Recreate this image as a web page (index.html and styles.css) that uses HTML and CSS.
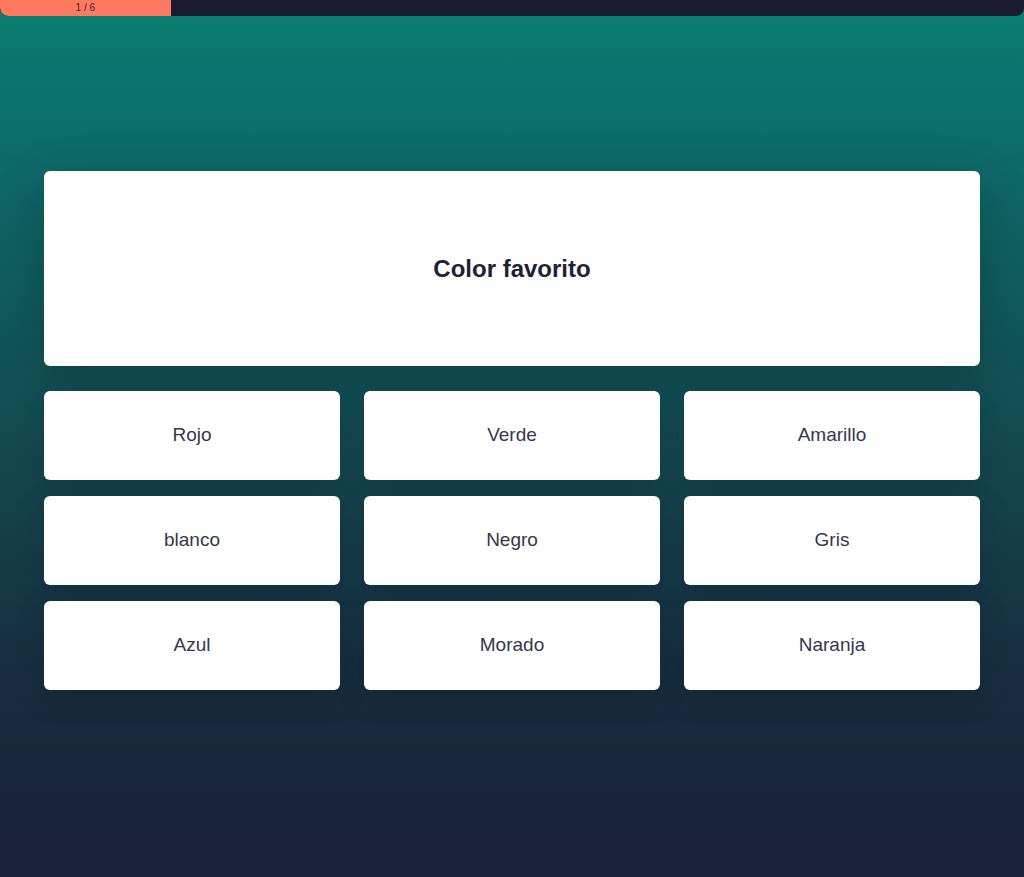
FILE: index.html
```html
<!DOCTYPE html>
<html lang="es">
<head>
<meta charset="utf-8">
<title>Color favorito</title>
<link rel="stylesheet" href="styles.css">
</head>
<body>
<div class="progress">
  <div class="progress-fill" style="width: 16.6667%"><span class="progress-label">1 / 6</span></div>
</div>
<main class="stage">
  <section class="question">
    <h1 class="question-title">Color favorito</h1>
  </section>
  <div class="options">
    <button class="option">Rojo</button>
    <button class="option">Verde</button>
    <button class="option">Amarillo</button>
    <button class="option">blanco</button>
    <button class="option">Negro</button>
    <button class="option">Gris</button>
    <button class="option">Azul</button>
    <button class="option">Morado</button>
    <button class="option">Naranja</button>
  </div>
</main>
</body>
</html>
```

FILE: styles.css
```css
* { box-sizing: border-box; }
html, body { height: 100%; }
body {
  margin: 0;
  font-family: "Liberation Sans", Arial, sans-serif;
  background: linear-gradient(180deg, #0a7e73 0%, #0e6868 20%, #134a50 50%, #172f40 75%, #1a2037 100%);
  min-height: 877px;
  overflow: hidden;
}
.progress {
  height: 16px;
  background: #1b1c33;
  border-radius: 0 0 8px 8px;
  overflow: hidden;
  display: flex;
}
.progress-fill {
  background: #ff7860;
  display: flex;
  align-items: center;
  justify-content: center;
  border-radius: 0 0 0 8px;
}
.progress-label {
  font-size: 10px;
  color: #3a2a2a;
  line-height: 16px;
}
.stage {
  padding: 155px 44px 0;
  display: flex;
  flex-direction: column;
  gap: 25px;
}
.question {
  background: #fff;
  border-radius: 6px;
  height: 195px;
  display: flex;
  align-items: center;
  justify-content: center;
  box-shadow: 0 12px 48px rgba(0, 0, 0, 0.22);
}
.question-title {
  margin: 0;
  font-size: 24px;
  font-weight: 700;
  color: #1e2236;
  padding-top: 1px;
}
.options {
  display: grid;
  grid-template-columns: repeat(3, 1fr);
  column-gap: 24px;
  row-gap: 16px;
}
.option {
  height: 89px;
  padding: 0 0 2px;
  background: #fff;
  border: none;
  border-radius: 6px;
  font-family: "Liberation Sans", Arial, sans-serif;
  font-size: 19px;
  color: #35374c;
  box-shadow: 0 8px 30px rgba(0, 0, 0, 0.15);
  cursor: pointer;
}
```
